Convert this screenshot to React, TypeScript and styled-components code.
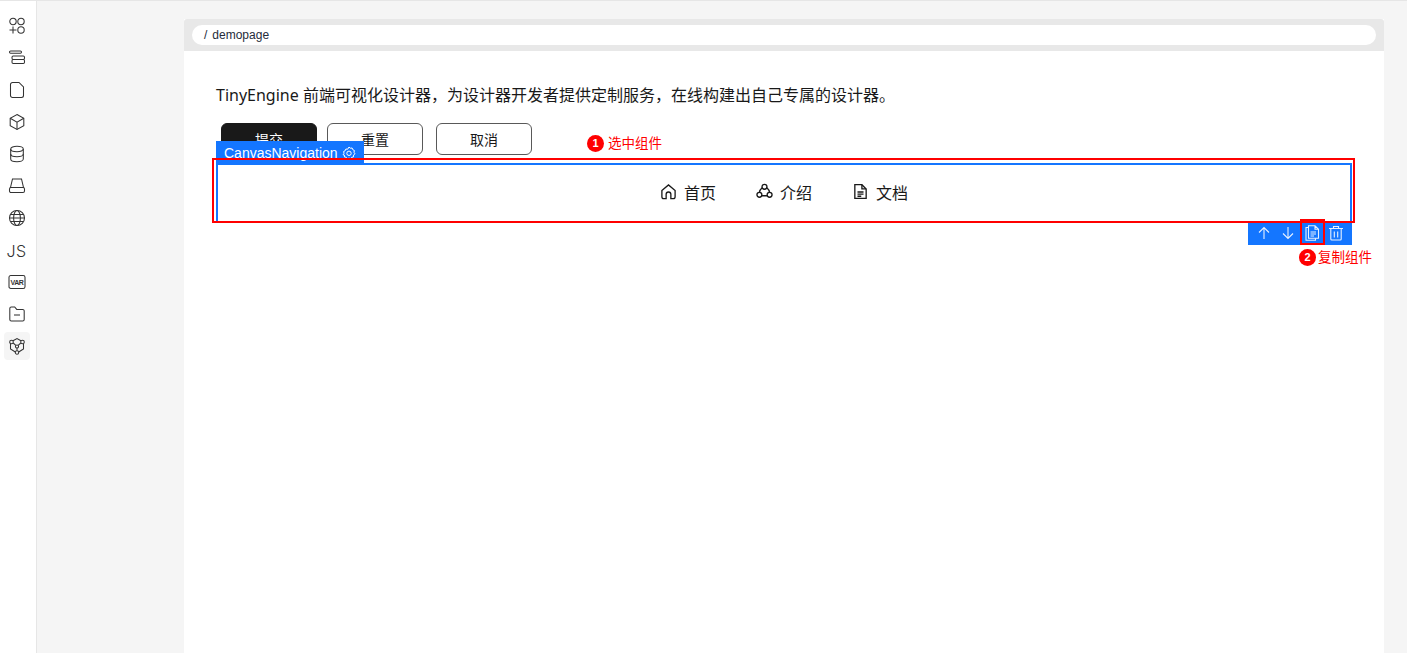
import React from 'react';
import styled, { createGlobalStyle } from 'styled-components';

const GlobalStyle = createGlobalStyle`
  html, body {
    margin: 0;
    height: 100%;
    overflow: hidden;
    background: #f5f5f5;
    font-family: "Noto Sans", "Noto Sans CJK SC", sans-serif;
  }
`;

const Page = styled.div`
  display: flex;
  box-sizing: border-box;
  height: 653px;
  border-top: 1px solid #e6e6e6;
`;

const Sidebar = styled.nav`
  display: flex;
  flex-direction: column;
  align-items: center;
  flex: none;
  box-sizing: border-box;
  width: 37px;
  padding: 11px 3px 0 0;
  gap: 4px;
  background: #fff;
  border-right: 1px solid #e6e6e6;
`;

const SideItem = styled.div<{ $active?: boolean }>`
  display: flex;
  align-items: center;
  justify-content: center;
  width: 26px;
  height: 28px;
  border-radius: 4px;
  color: #333;
  background: ${({ $active }) => ($active ? '#f5f5f5' : 'transparent')};

  svg {
    width: 18px;
    height: 18px;
    fill: none;
    stroke: currentColor;
    stroke-width: 1.05;
  }
`;

const JsLabel = styled.span`
  padding-top: 2px;
  font: 300 16px "Inter", sans-serif;
  letter-spacing: 0.5px;
  color: #333;
`;

const VarText = styled.text`
  font: bold 7px "Liberation Sans", sans-serif;
  letter-spacing: -0.4px;
  fill: #333;
  stroke: none;
`;

const Main = styled.main`
  flex: 1;
  padding: 18px 23px 0 147px;
`;

const Canvas = styled.section`
  position: relative;
  height: 634px;
  background: #fff;
`;

const TabBar = styled.div`
  box-sizing: border-box;
  height: 32px;
  padding: 6px 8px;
  background: #e8e8e8;
  border-radius: 3px 3px 0 0;
`;

const PathPill = styled.div`
  height: 20px;
  padding-left: 12px;
  border-radius: 10px;
  background: #fff;
  font: 12px/20px "Liberation Sans", sans-serif;
  color: #252b3a;
`;

const PathSlash = styled.span`
  margin-right: 5px;
`;

const Content = styled.div`
  padding: 32px 32px 0;
`;

const Intro = styled.p`
  margin: 0;
  font-size: 16px;
  line-height: 24px;
  color: #191919;
`;

const ButtonRow = styled.div`
  display: flex;
  gap: 10px;
  margin-top: 16px;
  padding-left: 5px;
`;

const ActionButton = styled.button<{ $primary?: boolean; $gap?: number }>`
  box-sizing: border-box;
  width: 96px;
  height: 32px;
  margin-left: ${({ $gap }) => $gap ?? 0}px;
  padding: 0;
  border: 1px solid ${({ $primary }) => ($primary ? '#191919' : '#595959')};
  border-radius: 6px;
  background: ${({ $primary }) => ($primary ? '#191919' : '#fff')};
  color: ${({ $primary }) => ($primary ? '#fff' : '#191919')};
  font: 14px "Noto Sans CJK SC", sans-serif;
`;

const NavRow = styled.div`
  display: flex;
  justify-content: center;
  align-items: center;
  gap: 40px;
  height: 59px;
  margin-top: 7px;
`;

const NavItem = styled.div`
  display: flex;
  align-items: center;
  gap: 7px;
  font-size: 16px;
  color: #191919;

  svg {
    width: 17px;
    height: 17px;
    fill: none;
    stroke: currentColor;
    stroke-width: 1.4;
  }
`;

const SelectBox = styled.div`
  position: absolute;
  left: 32px;
  top: 144px;
  box-sizing: border-box;
  width: 1136px;
  height: 60px;
  border: 2px solid #1476ff;
`;

const SelectTag = styled.div`
  position: absolute;
  left: 32px;
  top: 122px;
  display: flex;
  align-items: center;
  gap: 4px;
  box-sizing: border-box;
  width: 148px;
  height: 24px;
  padding-left: 8px;
  background: #1476ff;
  color: #fff;
  font: 14px "Liberation Sans", sans-serif;

  svg {
    width: 14px;
    height: 14px;
    fill: none;
    stroke: currentColor;
    stroke-width: 1;
  }
`;

const RedFrame = styled.div`
  position: absolute;
  left: 28px;
  top: 139px;
  box-sizing: border-box;
  width: 1143px;
  height: 65px;
  border: 2px solid #f00;
`;

const Toolbar = styled.div`
  position: absolute;
  left: 1064px;
  top: 204px;
  display: flex;
  align-items: center;
  box-sizing: border-box;
  width: 104px;
  height: 22px;
  padding: 0 0 2px 4px;
  background: #1476ff;
  color: #fff;
`;

const ToolIcon = styled.span`
  display: flex;
  justify-content: center;
  width: 24px;

  svg {
    width: 16px;
    height: 16px;
    fill: none;
    stroke: currentColor;
    stroke-width: 1.1;
    opacity: 0.9;
  }
`;

const RedHighlight = styled.div`
  position: absolute;
  left: 1116px;
  top: 200px;
  box-sizing: border-box;
  width: 25px;
  height: 26px;
  border: 2px solid #f00;
`;

const Note = styled.div<{ $left: number; $top: number; $gap: number }>`
  position: absolute;
  left: ${({ $left }) => $left}px;
  top: ${({ $top }) => $top}px;
  display: flex;
  align-items: center;
  gap: ${({ $gap }) => $gap}px;
  color: #f00;
  font-size: 13.5px;
  line-height: 18px;
  white-space: nowrap;
`;

const NoteBadge = styled.span`
  width: 17px;
  height: 17px;
  border-radius: 50%;
  background: #f00;
  color: #fff;
  font: bold 11px/17px "Liberation Sans", sans-serif;
  text-align: center;
`;

const sideIcons: React.ReactNode[] = [
  <svg viewBox="0 0 18 18" key="a">
    <circle cx="5" cy="4.5" r="3.2" />
    <circle cx="13" cy="4.5" r="3.2" />
    <circle cx="13" cy="13" r="3.2" />
    <path d="M5 9.500v7M1.500 13h7" />
  </svg>,
  <svg viewBox="0 0 18 18" key="b">
    <rect x="1.500" y="2" width="12" height="2.200" rx="1.100" />
    <rect x="4" y="7" width="12.500" height="3.500" rx="1.200" />
    <rect x="4" y="10.500" width="12.500" height="4" rx="1.200" />
  </svg>,
  <svg viewBox="0 0 18 18" key="c">
    <path d="M4.500 1.500h6.500l4.500 4.500v8.500a2 2 0 0 1-2 2H4.500a2 2 0 0 1-2-2V3.500a2 2 0 0 1 2-2z" />
  </svg>,
  <svg viewBox="0 0 18 18" key="d">
    <path d="M9 1.500l6.800 3.800v7.400L9 16.500l-6.800-3.800V5.300z" />
    <path d="M2.200 5.300L9 9.200l6.800-3.900M9 9.200v7.300" />
  </svg>,
  <svg viewBox="0 0 18 18" key="e">
    <ellipse cx="9" cy="4" rx="6.300" ry="2.700" />
    <path d="M2.700 4v10c0 1.500 2.800 2.700 6.300 2.700s6.300-1.200 6.300-2.700V4" />
    <path d="M2.700 9c0 1.500 2.800 2.700 6.300 2.700s6.300-1.200 6.300-2.700" />
  </svg>,
  <svg viewBox="0 0 18 18" key="f">
    <path d="M4.500 2h9l2 8.500h-13z" />
    <rect x="1.500" y="10.500" width="15" height="5" rx="1.500" />
  </svg>,
  <svg viewBox="0 0 18 18" key="g">
    <circle cx="9" cy="9" r="7.500" />
    <ellipse cx="9" cy="9" rx="3.400" ry="7.500" />
    <path d="M1.500 9h15M2.600 5.500h12.800M2.600 12.500h12.800" />
  </svg>,
  <JsLabel key="h">JS</JsLabel>,
  <svg viewBox="0 0 18 18" key="i">
    <rect x="1" y="2.500" width="16" height="13" rx="1.800" />
    <VarText x="9" y="11.600" textAnchor="middle">VAR</VarText>
  </svg>,
  <svg viewBox="0 0 18 18" key="j">
    <path d="M1.800 3.500a1.500 1.500 0 0 1 1.500-1.500h3.400l2 2.400h6a1.500 1.500 0 0 1 1.500 1.500v8.600a1.500 1.500 0 0 1-1.500 1.500H3.300a1.500 1.500 0 0 1-1.500-1.500z" />
    <path d="M6 10h6" />
  </svg>,
  <svg viewBox="0 0 18 18" key="k">
    <circle cx="9" cy="9.500" r="1.600" />
    <circle cx="3.500" cy="5" r="1.800" />
    <circle cx="14.500" cy="5" r="1.800" />
    <circle cx="9" cy="15.500" r="1.700" />
    <path d="M5 3.800L9 1.500l4 2.300M2.500 7v5l4.800 3M15.500 7v5l-4.800 3M5.200 6l2.600 2.400M12.800 6l-2.600 2.400M9 11.200v2.600" />
  </svg>,
];

const App = () => {
  return (
    <>
      <GlobalStyle />
      <Page>
        <Sidebar>
          {sideIcons.map((icon, i) => (
            <SideItem key={i} $active={i === sideIcons.length - 1}>
              {icon}
            </SideItem>
          ))}
        </Sidebar>
        <Main>
          <Canvas>
            <TabBar>
              <PathPill>
                <PathSlash>/</PathSlash>demopage
              </PathPill>
            </TabBar>
            <Content>
              <Intro>TinyEngine 前端可视化设计器，为设计器开发者提供定制服务，在线构建出自己专属的设计器。</Intro>
              <ButtonRow>
                <ActionButton $primary>提交</ActionButton>
                <ActionButton>重置</ActionButton>
                <ActionButton $gap={3}>取消</ActionButton>
              </ButtonRow>
              <NavRow>
                <NavItem>
                  <svg viewBox="0 0 18 18">
                    <path d="M2 8l7-6 7 6v6.500a2 2 0 0 1-2 2h-2.500V12a2.500 2.500 0 0 0-5 0v4.500H4a2 2 0 0 1-2-2z" />
                  </svg>
                  首页
                </NavItem>
                <NavItem>
                  <svg viewBox="0 0 18 18">
                    <circle cx="9" cy="4" r="2.600" />
                    <circle cx="3.600" cy="12.500" r="2.600" />
                    <circle cx="14.400" cy="12.500" r="2.600" />
                    <path d="M6.200 13.500h5.600M3.600 9.900c.3-1.900 1.300-3.600 2.900-4.900M14.400 9.900c-.3-1.900-1.300-3.600-2.900-4.900" />
                  </svg>
                  介绍
                </NavItem>
                <NavItem>
                  <svg viewBox="0 0 18 18">
                    <path d="M3 1.800h7.500L15 6.300v9.900H3z" />
                    <path d="M10.500 1.800v4.500H15M5.800 9.500h6.400M5.800 11.800h6.400M5.800 14h4" />
                  </svg>
                  文档
                </NavItem>
              </NavRow>
            </Content>
            <SelectBox />
            <SelectTag>
              CanvasNavigation
              <svg viewBox="0 0 14 14">
                <path d="M7 1l1.300 1.200 1.800-.2.700 1.700 1.600.8-.4 1.800.9 1.500-1.300 1.300-.1 1.800-1.800.4-1 1.500-1.700-.7-1.700.7-1-1.500-1.800-.4-.1-1.800L1.100 8.800 2 7.300l-.4-1.800 1.600-.8.7-1.700 1.800.2z" />
                <circle cx="7" cy="7.300" r="2.200" />
              </svg>
            </SelectTag>
            <RedFrame />
            <Toolbar>
              <ToolIcon>
                <svg viewBox="0 0 16 16">
                  <path d="M8 14V2.500M3 7.500l5-5 5 5" />
                </svg>
              </ToolIcon>
              <ToolIcon>
                <svg viewBox="0 0 16 16">
                  <path d="M8 2v11.500M3 8.500l5 5 5-5" />
                </svg>
              </ToolIcon>
              <ToolIcon>
                <svg viewBox="0 0 16 16">
                  <path d="M4.500.8h6.500l3.500 3.500v8.900h-10zM11 .8v3.500h3.500M6.500 7h5.500M6.500 9h5.500M6.500 11h3.500" />
                  <path d="M4.500 2.500H2v12.700h9.500v-2" />
                </svg>
              </ToolIcon>
              <ToolIcon>
                <svg viewBox="0 0 16 16">
                  <path d="M1 3.500h14M5.500 3.500V1.500h5v2M2.800 3.500v10.500a1 1 0 0 0 1 1h8.400a1 1 0 0 0 1-1V3.500M6.300 6.500v6M9.700 6.500v6" />
                </svg>
              </ToolIcon>
            </Toolbar>
            <RedHighlight />
            <Note $left={403} $top={115} $gap={4}>
              <NoteBadge>1</NoteBadge>
              选中组件
            </Note>
            <Note $left={1115} $top={229} $gap={2}>
              <NoteBadge>2</NoteBadge>
              复制组件
            </Note>
          </Canvas>
        </Main>
      </Page>
    </>
  );
};

export default App;
